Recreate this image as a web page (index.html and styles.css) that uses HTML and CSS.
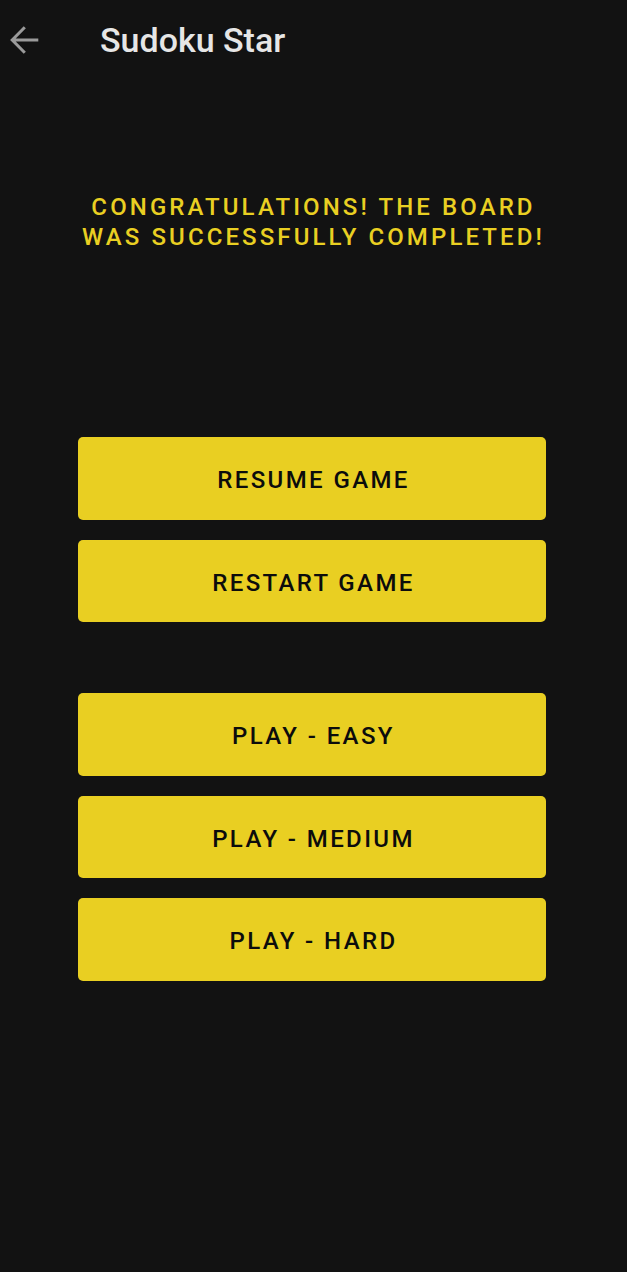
FILE: index.html
```html
<!DOCTYPE html>
<html>
<head>
<meta charset="utf-8">
<link rel="stylesheet" href="styles.css">
</head>
<body>
<header class="appbar">
  <span class="back">
    <svg width="32" height="32" viewBox="0 0 32 32"><path d="M29.3 16H3.5M15.8 3.2L3.2 16L15.8 28.8" fill="none" stroke="#9a9a9a" stroke-width="3" stroke-linecap="butt" stroke-linejoin="miter"/></svg>
  </span>
  <h1 class="title">Sudoku Star</h1>
</header>
<main class="content">
  <p class="congrats">CONGRATULATIONS! THE BOARD<br>WAS SUCCESSFULLY COMPLETED!</p>
  <div class="group group-game">
    <button class="btn">RESUME GAME</button>
    <button class="btn">RESTART GAME</button>
  </div>
  <div class="group group-play">
    <button class="btn">PLAY - EASY</button>
    <button class="btn">PLAY - MEDIUM</button>
    <button class="btn">PLAY - HARD</button>
  </div>
</main>
</body>
</html>
```
FILE: styles.css
```css
html, body {
  margin: 0;
  padding: 0;
  background: #121212;
  font-family: Roboto, "Liberation Sans", sans-serif;
}
body {
  width: 627px;
  height: 1272px;
  overflow: hidden;
}
.appbar {
  display: flex;
  align-items: center;
  height: 80px;
}
.back {
  display: flex;
  width: 32px;
  height: 32px;
  margin-left: 9px;
}
.title {
  margin: 0 0 0 59px;
  font-size: 34px;
  font-weight: 500;
  color: #e6e6e6;
  letter-spacing: 0;
}
.content {
  display: flex;
  flex-direction: column;
  align-items: center;
}
.congrats {
  margin: 112px 0 0;
  text-align: center;
  color: #e9cf22;
  font-size: 24px;
  font-weight: 500;
  line-height: 30px;
  letter-spacing: 3.1px;
}
.group {
  display: flex;
  flex-direction: column;
  gap: 20px;
  width: 468px;
  margin-right: 3px;
}
.group-game { margin-top: 185px; }
.group-play { margin-top: 71px; }
.btn {
  height: 82.5px;
  border: none;
  border-radius: 5px;
  background: #e9cf22;
  color: #0c0c0c;
  font-family: Roboto, "Liberation Sans", sans-serif;
  font-size: 24px;
  font-weight: 500;
  letter-spacing: 2.4px;
  padding: 4px 0 0 3px;
}
```
